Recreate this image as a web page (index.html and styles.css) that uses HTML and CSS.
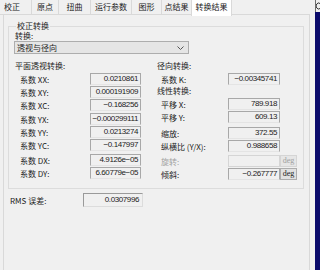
FILE: index.html
```html
<!DOCTYPE html>
<html lang="zh-CN">
<head>
    <meta charset="UTF-8">
    <title>转换结果</title>
    <link rel="stylesheet" href="styles.css">
</head>
<body>
    <div class="main">
        <!-- Tab strip -->
        <div class="tabs">
            <span class="tab first">校正</span>
            <span class="tab w27">原点</span>
            <span class="tab w32">扭曲</span>
            <span class="tab w41">运行参数</span>
            <span class="tab w30">图形</span>
            <span class="tab w30">点结果</span>
            <span class="tab active">转换结果</span>
        </div>

        <div class="panel">
            <fieldset class="group">
                <legend>校正转换</legend>

                <div class="field-label">转换:</div>
                <div class="combo">
                    <span>透视与径向</span>
                    <svg width="7" height="4" viewBox="0 0 7 4"><polyline points="0.5,0.5 3.5,3.5 6.5,0.5" fill="none" stroke="#555" stroke-width="1"/></svg>
                </div>

                <div class="columns">
                    <div class="col left">
                        <div class="head">平面透视转换:</div>
                        <div class="row"><span class="lbl">系数 XX:</span><span class="val">0.0210861</span></div>
                        <div class="row"><span class="lbl">系数 XY:</span><span class="val">0.000191909</span></div>
                        <div class="row"><span class="lbl">系数 XC:</span><span class="val">−0.168256</span></div>

                        <div class="row gap2"><span class="lbl">系数 YX:</span><span class="val">−0.000299111</span></div>
                        <div class="row"><span class="lbl">系数 YY:</span><span class="val">0.0213274</span></div>
                        <div class="row"><span class="lbl">系数 YC:</span><span class="val">−0.147997</span></div>

                        <div class="row gap3"><span class="lbl">系数 DX:</span><span class="val">4.9126e−05</span></div>
                        <div class="row"><span class="lbl">系数 DY:</span><span class="val">6.60779e−05</span></div>
                    </div>

                    <div class="col right">
                        <div class="head">径向转换:</div>
                        <div class="row"><span class="lbl">系数 K:</span><span class="val">−0.00345741</span></div>

                        <div class="head">线性转换:</div>
                        <div class="row"><span class="lbl">平移 X:</span><span class="val">789.918</span></div>
                        <div class="row"><span class="lbl">平移 Y:</span><span class="val">609.13</span></div>

                        <div class="row gap4"><span class="lbl">缩放:</span><span class="val">372.55</span></div>
                        <div class="row"><span class="lbl">纵横比 (Y/X):</span><span class="val">0.988658</span></div>

                        <div class="row gap3 disabled"><span class="lbl">旋转:</span><span class="val"></span><span class="btn">deg</span></div>
                        <div class="row"><span class="lbl">倾斜:</span><span class="val">−0.267777</span><span class="btn">deg</span></div>
                    </div>
                </div>
            </fieldset>

            <div class="rms">
                <span class="lbl">RMS 误差:</span>
                <span class="val">0.0307996</span>
            </div>
        </div>
    </div>

    <!-- edge of the window behind -->
    <div class="side">
        <div class="side-top">
            <svg width="4" height="10" viewBox="0 0 4 10"><path d="M4 2.5 A2.5 3 0 1 0 4 7.5" fill="none" stroke="#333" stroke-width="1"/></svg>
        </div>
        <div class="side-bar"></div>
    </div>
</body>
</html>
```

FILE: styles.css
```css
body {
    margin: 0;
    width: 320px;
    height: 270px;
    overflow: hidden;
    display: flex;
    background-color: #f0f0f0;
    color: #222;
    font-family: "Noto Sans CJK SC", "Liberation Sans", sans-serif;
    font-size: 8px;
}

.main {
    width: 315px;
    display: flex;
    flex-direction: column;
}

/* tabs */
.tabs {
    display: flex;
    height: 15px;
    position: relative;
    z-index: 1;
}

.tab {
    box-sizing: border-box;
    height: 15px;
    line-height: 14px;
    text-align: center;
    border-right: 1px solid #d9d9d9;
    border-bottom: 1px solid #d9d9d9;
}

.tab.first { width: 32px; text-align: left; padding-left: 4px; }
.tab.w27 { width: 27px; }
.tab.w32 { width: 32px; }
.tab.w41 { width: 41px; }
.tab.w30 { width: 30px; }

.tab.active {
    width: 41px;
    height: 16px;
    margin-left: -1px;
    background: #fff;
    border-left: 1px solid #d9d9d9;
    border-bottom: none;
}

.panel {
    flex: 1;
    box-sizing: border-box;
    width: 307px;
    margin-left: 3px;
    margin-top: -1px;
    border: 1px solid #d9d9d9;
    border-bottom: none;
}

/* group box */
.group {
    box-sizing: border-box;
    width: 296px;
    margin: 6px 0 0 4px;
    padding: 0 6px 8px 5px;
    border: 1px solid #dcdcdc;
}

.group legend {
    padding: 0 1px;
    margin-left: 2px;
    line-height: 10px;
    height: 10px;
}

.field-label {
    height: 10px;
    line-height: 10px;
    padding-left: 1px;
}

.combo {
    box-sizing: border-box;
    width: 175px;
    height: 13px;
    display: flex;
    align-items: center;
    justify-content: space-between;
    padding: 0 4px 0 2px;
    background: #e5e5e5;
    border: 1px solid #adadad;
}

.columns {
    display: flex;
    gap: 15px;
    margin-top: 6px;
}

.col.left { width: 127px; padding-left: 1px; }
.col.right { width: 140px; }

.head {
    height: 12px;
    line-height: 12px;
}

.row {
    display: flex;
    align-items: center;
    height: 12px;
    margin-top: 1px;
}

.row.gap2 { margin-top: 2px; }
.row.gap3 { margin-top: 3px; }
.row.gap4 { margin-top: 4px; }

.left .lbl { width: 70px; padding-left: 5px; }
.right .lbl { width: 67px; padding-left: 4px; }

.val {
    box-sizing: border-box;
    height: 12px;
    line-height: 10px;
    text-align: right;
    padding-right: 2px;
    font-family: "Liberation Sans", sans-serif;
    font-size: 8px;
    letter-spacing: -0.4px;
    border: 1px solid #a8a8a8;
    border-bottom-color: #e4e4e4;
    background: #f0f0f0;
}

.left .val { width: 51px; }
.right .val { width: 52px; }

.btn {
    box-sizing: border-box;
    width: 17px;
    height: 12px;
    line-height: 10px;
    text-align: center;
    font-family: "Liberation Serif", serif;
    font-size: 8px;
    background: #e1e1e1;
    border: 1px solid #adadad;
}

.disabled .lbl { color: #a0a0a0; }
.disabled .val { border-color: #d5d5d5; }
.disabled .btn { color: #a0a0a0; background: #e6e6e6; border-color: #d5d5d5; }

/* RMS row */
.rms {
    display: flex;
    align-items: center;
    margin-top: 4px;
    padding-left: 6px;
}

.rms .lbl { width: 73px; }

.rms .val {
    width: 60px;
    height: 14px;
    line-height: 12px;
    padding-right: 3px;
    border: 1px solid #9a9a9a;
    border-bottom-color: #dcdcdc;
    border-right-color: #dcdcdc;
}

/* window behind on the right */
.side {
    width: 5px;
    display: flex;
    flex-direction: column;
}

.side-top {
    height: 12px;
    box-sizing: border-box;
    border-left: 1px solid #6d6d6d;
    padding: 1px 0 0 0;
    overflow: hidden;
}

.side-top svg { display: block; }

.side-bar {
    flex: 1;
    background: #0a0a6a;
}
```
